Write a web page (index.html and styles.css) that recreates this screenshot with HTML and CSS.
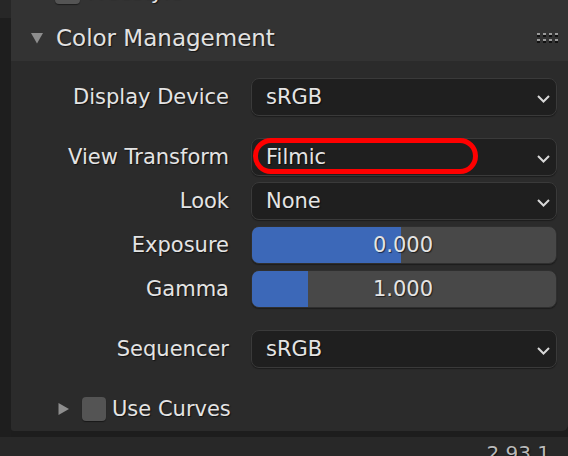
FILE: index.html
```html
<!DOCTYPE html>
<html>
<head>
<meta charset="utf-8">
<link rel="stylesheet" href="styles.css">
</head>
<body>
<div class="app">
  <div class="main">
    <div class="gutter"><div class="gutter-top"></div></div>
    <div class="panel">
      <div class="header">
        <div class="prev-row">
          <span class="checkbox"></span>
          <span class="prev-label">Freestyle</span>
        </div>
        <div class="head-row">
          <svg class="tri-down" width="12" height="12" viewBox="0 0 12 12"><polygon points="0,1 12,1 6,11.5" fill="#8e8e8e"/></svg>
          <span class="head-title">Color Management</span>
          <svg class="grip" width="22" height="10" viewBox="0 0 22 10">
            <g fill="#111">
              <rect x="0" y="2" width="3" height="2"/><rect x="6" y="2" width="3" height="2"/><rect x="12" y="2" width="3" height="2"/><rect x="18" y="2" width="3" height="2"/>
              <rect x="0" y="8" width="3" height="2"/><rect x="6" y="8" width="3" height="2"/><rect x="12" y="8" width="3" height="2"/><rect x="18" y="8" width="3" height="2"/>
            </g>
            <g fill="#9a9a9a">
              <rect x="0" y="0" width="3" height="2"/><rect x="6" y="0" width="3" height="2"/><rect x="12" y="0" width="3" height="2"/><rect x="18" y="0" width="3" height="2"/>
              <rect x="0" y="6" width="3" height="2"/><rect x="6" y="6" width="3" height="2"/><rect x="12" y="6" width="3" height="2"/><rect x="18" y="6" width="3" height="2"/>
            </g>
          </svg>
        </div>
      </div>
      <div class="body">
        <div class="rows">
          <div class="row">
            <span class="label">Display Device</span>
            <div class="widget menu"><span class="value">sRGB</span><svg class="chev" width="13" height="8" viewBox="0 0 13 8"><polyline points="1,1 6.5,6.5 12,1" fill="none" stroke="#d8d8d8" stroke-width="2"/></svg></div>
          </div>
          <div class="row sep">
            <span class="label">View Transform</span>
            <div class="widget menu"><span class="value">Filmic</span><svg class="chev" width="13" height="8" viewBox="0 0 13 8"><polyline points="1,1 6.5,6.5 12,1" fill="none" stroke="#d8d8d8" stroke-width="2"/></svg><span class="ring"></span></div>
          </div>
          <div class="row">
            <span class="label">Look</span>
            <div class="widget menu"><span class="value">None</span><svg class="chev" width="13" height="8" viewBox="0 0 13 8"><polyline points="1,1 6.5,6.5 12,1" fill="none" stroke="#d8d8d8" stroke-width="2"/></svg></div>
          </div>
          <div class="row">
            <span class="label">Exposure</span>
            <div class="widget slider"><span class="fill" style="width:49%"></span><span class="num">0.000</span></div>
          </div>
          <div class="row">
            <span class="label">Gamma</span>
            <div class="widget slider"><span class="fill" style="width:18.5%"></span><span class="num">1.000</span></div>
          </div>
          <div class="row sep">
            <span class="label">Sequencer</span>
            <div class="widget menu"><span class="value">sRGB</span><svg class="chev" width="13" height="8" viewBox="0 0 13 8"><polyline points="1,1 6.5,6.5 12,1" fill="none" stroke="#d8d8d8" stroke-width="2"/></svg></div>
          </div>
        </div>
        <div class="sub-row">
          <svg class="tri-right" width="12" height="12" viewBox="0 0 12 12"><polygon points="0.5,0 11,6 0.5,12" fill="#8e8e8e"/></svg>
          <span class="checkbox"></span>
          <span class="sub-label">Use Curves</span>
        </div>
      </div>
    </div>
  </div>
  <div class="status"><span class="version">2.93.1</span></div>
</div>
</body>
</html>
```

FILE: styles.css
```css
* { box-sizing: border-box; }
html, body {
  margin: 0;
  padding: 0;
  width: 568px;
  height: 456px;
  overflow: hidden;
  background: #1d1d1d;
}
.app {
  width: 568px;
  height: 456px;
  display: flex;
  flex-direction: column;
  font-family: "DejaVu Sans", sans-serif;
  color: #e4e4e4;
  text-shadow: 1px 1px 1px rgba(0, 0, 0, 0.6);
}
.main {
  height: 437px;
  display: flex;
  flex: none;
}
.gutter {
  width: 11px;
  flex: none;
  background: #1e1e1e;
}
.gutter-top {
  height: 18px;
  background: #272727;
}
.panel {
  flex: 1;
  height: 431px;
  background: #2b2b2b;
  border-radius: 0 0 6px 3px;
  overflow: hidden;
  display: flex;
  flex-direction: column;
}
.header {
  background: #333333;
  height: 61px;
  flex: none;
}
.prev-row {
  height: 40px;
  margin-top: -28px;
  display: flex;
  align-items: center;
  padding-left: 44px;
  font-size: 21px;
}
.prev-row .checkbox { width: 25px; }
.prev-label { margin-left: 7px; }
.head-row {
  height: 49px;
  padding: 2px 9px 0 20px;
  display: flex;
  align-items: center;
}
.tri-down { flex: none; }
.head-title {
  font-size: 23px;
  margin-left: 13px;
  color: #e2e2e2;
}
.grip { margin-left: auto; flex: none; }
.body {
  padding-top: 17px;
  display: flex;
  flex-direction: column;
}
.rows {
  display: flex;
  flex-direction: column;
  gap: 6px;
}
.row {
  height: 38px;
  display: flex;
  align-items: center;
  gap: 22px;
  font-size: 21px;
}
.row.sep { margin-top: 16px; }
.label {
  width: 218px;
  text-align: right;
  flex: none;
}
.widget {
  width: 306px;
  height: 38px;
  flex: none;
  border-radius: 8px;
  position: relative;
  display: flex;
  align-items: center;
}
.menu {
  background: #1f1f1f;
  border: 1px solid #3a3a3a;
  box-shadow: 0 1px 1px rgba(0, 0, 0, 0.35);
  padding: 0 6px 0 14px;
}
.menu .value { flex: 1; }
.chev { flex: none; margin-top: 4px; }
.ring {
  position: absolute;
  left: 1px;
  top: -1px;
  width: 225px;
  height: 36px;
  border: 5px solid #ff0000;
  border-radius: 18px;
}
.slider {
  background: #484848;
  border: 1px solid #2f2f2f;
  box-shadow: 0 1px 1px rgba(0, 0, 0, 0.35);
  overflow: hidden;
  justify-content: center;
}
.fill {
  position: absolute;
  left: 0;
  top: 0;
  bottom: 0;
  background: #3c68b8;
}
.num {
  position: relative;
  margin-right: 2px;
}
.sub-row {
  margin-top: 18px;
  height: 45px;
  display: flex;
  align-items: center;
  padding-left: 47px;
  font-size: 21px;
}
.checkbox {
  display: block;
  width: 24px;
  height: 24px;
  border-radius: 4px;
  background: #545454;
  box-shadow: 0 1px 1px rgba(0, 0, 0, 0.45);
  flex: none;
}
.sub-row .checkbox { margin-left: 12px; }
.sub-label { margin-left: 6px; }
.status {
  height: 19px;
  flex: none;
  background: #282828;
  overflow: hidden;
  display: flex;
  justify-content: flex-end;
  padding: 4px 18px 0 0;
  font-size: 20px;
  line-height: 24px;
  color: #b9b9b9;
}
.version { white-space: nowrap; }
```
